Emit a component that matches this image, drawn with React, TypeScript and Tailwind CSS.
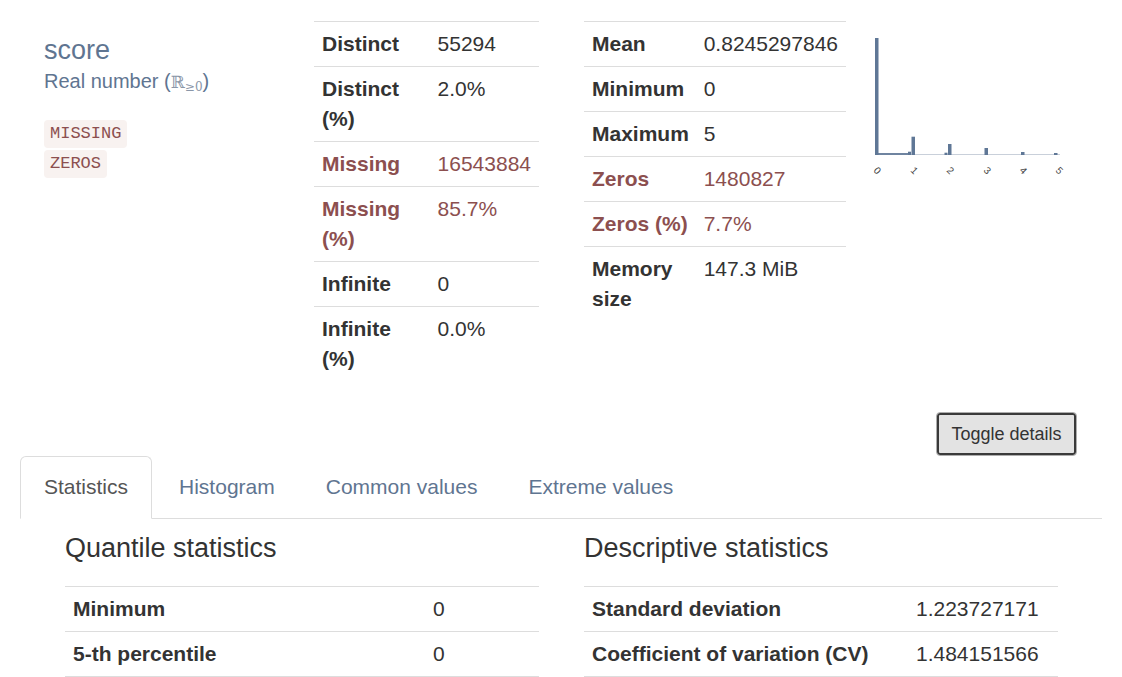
import React from "react";

const slate = "text-[#5f7591]";
const alert = "text-[#8c4f4f]";

type Row = { label: string; value: string; warn?: boolean };

const overviewA: Row[] = [
  { label: "Distinct", value: "55294" },
  { label: "Distinct (%)", value: "2.0%" },
  { label: "Missing", value: "16543884", warn: true },
  { label: "Missing (%)", value: "85.7%", warn: true },
  { label: "Infinite", value: "0" },
  { label: "Infinite (%)", value: "0.0%" },
];

const overviewB: Row[] = [
  { label: "Mean", value: "0.8245297846" },
  { label: "Minimum", value: "0" },
  { label: "Maximum", value: "5" },
  { label: "Zeros", value: "1480827", warn: true },
  { label: "Zeros (%)", value: "7.7%", warn: true },
  { label: "Memory size", value: "147.3 MiB" },
];

function SmallTable({ rows, labelW }: { rows: Row[]; labelW: string }) {
  return (
    <table className="w-full border-collapse">
      <tbody>
        {rows.map((r) => (
          <tr key={r.label} className={r.warn ? alert : "text-[#333]"}>
            <th className={`${labelW} border-t border-[#ddd] pl-2 pr-1 pt-[7px] pb-[7px] text-left align-top font-bold`}>{r.label}</th>
            <td className="border-t border-[#ddd] px-2 pt-[7px] pb-[7px] align-top">{r.value}</td>
          </tr>
        ))}
      </tbody>
    </table>
  );
}

function MiniHistogram() {
  const base = 134;
  const bars: [number, number, number][] = [
    [5, 3.5, 17],
    [38, 3, 130.7],
    [41.5, 3.5, 115.7],
    [74.5, 3, 131.7],
    [78, 3.5, 123],
    [114.5, 3.5, 127],
    [151, 3.5, 131],
    [184, 3.5, 132],
  ];
  const ticks = [5, 42, 78, 115, 151, 187];
  return (
    <svg width="200" height="165" viewBox="0 0 200 165">
      <line x1="8" y1="133.5" x2="190" y2="133.5" stroke="#c9d0da" strokeWidth="1" />
      <rect x="8" y="132" width="30" height="2" fill="#6f84a0" />
      {bars.map(([x, w, y], i) => (
        <rect key={i} x={x} y={y} width={w} height={base - y} fill="#5f7796" />
      ))}
      {ticks.map((x, i) => (
        <text
          key={i}
          x={x}
          y={152}
          fontSize="10"
          fill="#444"
          fontFamily="Liberation Sans, Arial, sans-serif"
          textAnchor="middle"
          transform={`rotate(45 ${x} 152)`}
        >
          {i}
        </text>
      ))}
    </svg>
  );
}

function StatTable({ rows, labelW }: { rows: [string, string][]; labelW: string }) {
  return (
    <table className="w-full border-collapse border-b border-[#ddd]">
      <tbody>
        {rows.map(([l, v]) => (
          <tr key={l} className="text-[#333]">
            <th className={`${labelW} border-t border-[#ddd] px-2 pt-[7px] pb-[7px] text-left font-bold`}>{l}</th>
            <td className="border-t border-[#ddd] px-2 pt-[7px] pb-[7px]">{v}</td>
          </tr>
        ))}
      </tbody>
    </table>
  );
}

export default function App() {
  const tabs = ["Statistics", "Histogram", "Common values", "Extreme values"];
  return (
    <div className="min-h-screen bg-white px-[20px] pt-[21px] font-['Liberation_Sans',Arial,sans-serif] text-[21px] leading-[30px] text-[#333]">
      <div className="flex">
        <div className="ml-[24px] w-[270px] pt-[14px]">
          <div className={`text-[27px] leading-[30px] ${slate}`}>score</div>
          <div className={`text-[20px] leading-[32px] ${slate}`}>
            Real number (<span className="font-['DejaVu_Serif',serif] text-[17px] text-[#8a96a8]">ℝ<sub className="text-[12px]">≥0</sub></span>)
          </div>
          <div className="mt-[22px] flex flex-col items-start gap-[2px]">
            <code className={`rounded-[4px] bg-[#f8f2f0] px-[6px] font-['Liberation_Mono',monospace] text-[17px] leading-[28px] ${alert}`}>MISSING</code>
            <code className={`rounded-[4px] bg-[#f8f2f0] px-[6px] font-['Liberation_Mono',monospace] text-[17px] leading-[28px] ${alert}`}>ZEROS</code>
          </div>
        </div>
        <div className="w-[225px]">
          <SmallTable rows={overviewA} labelW="w-[116px]" />
        </div>
        <div className="ml-[45px] w-[262px]">
          <SmallTable rows={overviewB} labelW="w-[113px]" />
        </div>
        <div className="ml-[24px]">
          <MiniHistogram />
        </div>
      </div>

      <div className="mr-[25px] mt-[31px] flex justify-end">
        <button className="h-[44px] w-[141px] rounded-[4px] border border-[#adadad] bg-[#e3e3e3] text-[18px] text-[#333] shadow-[inset_0_0_0_2px_#3a3a3a]">
          Toggle details
        </button>
      </div>

      <div className="flex gap-[3px] border-b border-[#ddd]">
        {tabs.map((t, i) => (
          <div
            key={t}
            className={
              i === 0
                ? "-mb-px rounded-t-[6px] border border-[#ddd] border-b-white bg-white px-[23px] py-[15px] text-[#555]"
                : `border border-transparent px-[23px] py-[15px] ${slate}`
            }
          >
            {t}
          </div>
        ))}
      </div>

      <div className="flex gap-[45px] pl-[45px]">
        <div className="w-[474px]">
          <div className="mt-[14px] text-[27px] leading-[30px] text-[#333]">Quantile statistics</div>
          <div className="mt-[23px]">
            <StatTable
              labelW="w-[360px]"
              rows={[
                ["Minimum", "0"],
                ["5-th percentile", "0"],
              ]}
            />
          </div>
        </div>
        <div className="w-[474px]">
          <div className="mt-[14px] text-[27px] leading-[30px] text-[#333]">Descriptive statistics</div>
          <div className="mt-[23px]">
            <StatTable
              labelW="w-[324px]"
              rows={[
                ["Standard deviation", "1.223727171"],
                ["Coefficient of variation (CV)", "1.484151566"],
              ]}
            />
          </div>
        </div>
      </div>
    </div>
  );
}
